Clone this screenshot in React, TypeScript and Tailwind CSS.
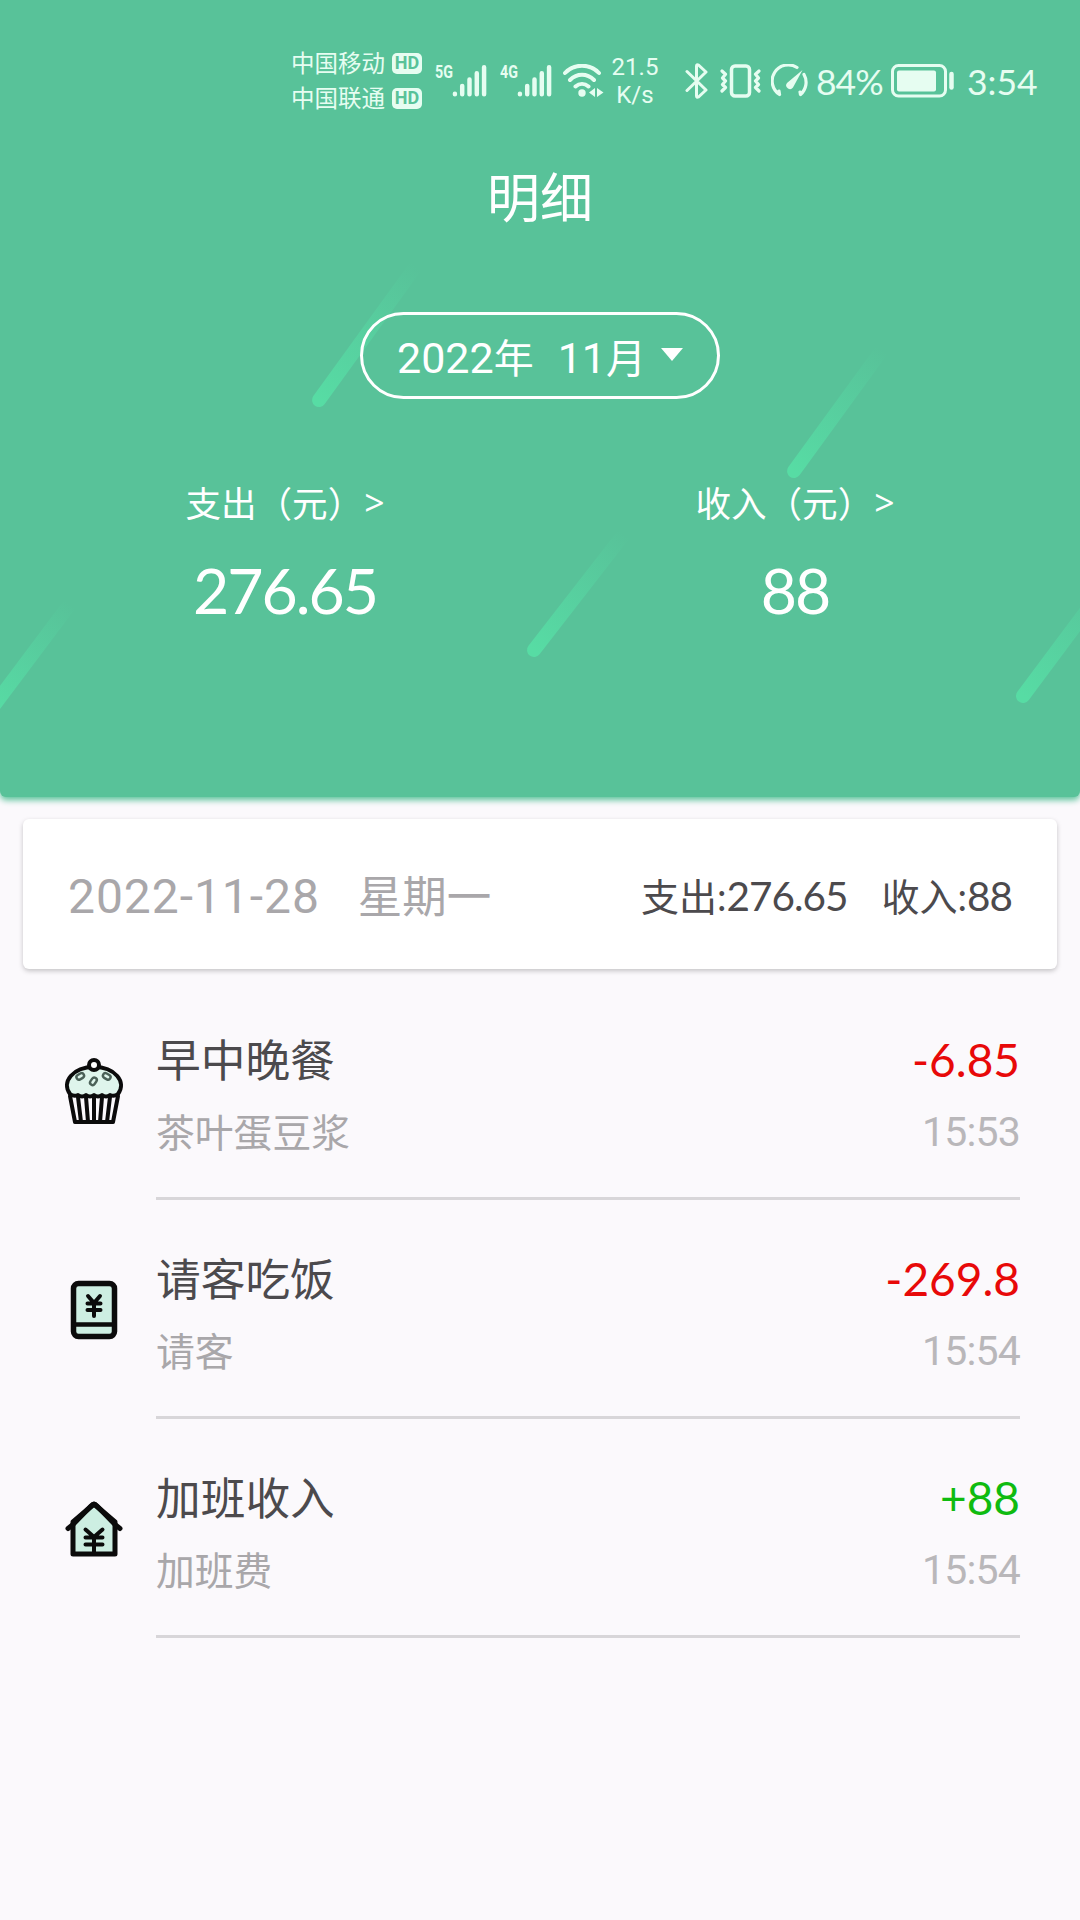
import React from 'react';

type Entry = {
  icon: React.ReactNode;
  title: string;
  note: string;
  amount: string;
  time: string;
  income?: boolean;
};

const Streaks = () => {
  const streaks = [
    [319, 400, 416, 266],
    [794, 471, 882, 350],
    [534, 650, 624, 534],
    [-8, 708, 70, 604],
    [1023, 696, 1114, 574],
  ];
  return (
    <svg className="absolute inset-0" width="1080" height="797" viewBox="0 0 1080 797" fill="none">
      {streaks.map(([x1, y1, x2, y2], i) => (
        <g key={i}>
          <linearGradient id={`streak-${i}`} gradientUnits="userSpaceOnUse" x1={x1} y1={y1} x2={x2} y2={y2}>
            <stop offset="0" stopColor="#57dca4" />
            <stop offset="0.35" stopColor="#57d8a3" stopOpacity="0.75" />
            <stop offset="1" stopColor="#57d8a3" stopOpacity="0" />
          </linearGradient>
          <line x1={x1} y1={y1} x2={x2} y2={y2} stroke={`url(#streak-${i})`} strokeWidth="14" strokeLinecap="round" />
        </g>
      ))}
    </svg>
  );
};

const Carrier = ({ name }: { name: string }) => (
  <div className="flex h-[35px] items-center">
    <span className="w-[101px] whitespace-nowrap text-[23.5px] leading-none">{name}</span>
    <span className="flex h-[21px] w-[30px] items-center justify-center rounded-[5px] bg-[#e6fdf1] font-['Roboto',sans-serif] text-[18px] font-bold leading-none text-[#58c299]">
      HD
    </span>
  </div>
);

const Signal = ({ label }: { label: string }) => (
  <div className="flex h-[34px] w-[52px]">
    <span className="w-[17px] origin-left scale-x-[0.75] whitespace-nowrap font-['Roboto',sans-serif] text-[19px] font-bold leading-[15px]">
      {label}
    </span>
    <svg width="36" height="34" viewBox="0 0 36 34" fill="none" stroke="currentColor" strokeWidth="4.6" strokeLinecap="round">
      <path d="M3 30.2v.5M10.500 22v8.700M18 15.500V30.700M25.500 9V30.700M33 2.800v27.900" />
    </svg>
  </div>
);

const WifiIcon = () => (
  <svg width="42" height="34" viewBox="0 0 42 34" fill="none" stroke="currentColor" strokeWidth="4" strokeLinecap="round">
    <path d="M2 9C11-.7 27-.7 36 9M7 16c7-7 17-7 24 0M12.500 22.500c4-3.500 9-3.500 13 0" />
    <circle cx="19" cy="29" r="3.700" fill="currentColor" stroke="none" />
    <path d="M32 24v9l-6-4.500zM34 24v9l6.500-4.500z" fill="currentColor" stroke="none" />
  </svg>
);

const BluetoothIcon = () => (
  <svg width="24" height="36" viewBox="0 0 24 36" fill="none" stroke="currentColor" strokeWidth="3" strokeLinecap="round" strokeLinejoin="round">
    <path d="M2 8.500 21 27l-7.500 7q-2 1-2-1V3q0-2 2-1L21 9 2 27.500" />
  </svg>
);

const VibrateIcon = () => (
  <svg width="41" height="34" viewBox="0 0 41 34" fill="none" stroke="currentColor" strokeWidth="3.200" strokeLinecap="round" strokeLinejoin="round">
    <rect x="11.500" y="2" width="18" height="30" rx="3.500" strokeWidth="3.500" />
    <path d="m2 7 3.500 3.200L2.500 14 5.500 17l-3 3.500 3 3L2 27M39 7l-3.500 3.200 3 3.800-3 3 3 3.500-3 3L39 27" />
  </svg>
);

const GaugeIcon = () => (
  <svg width="38" height="34" viewBox="0 0 38 34" fill="none" stroke="currentColor" strokeWidth="3.200" strokeLinecap="round">
    <path d="M8.500 30.500A16 16 0 0 1 26 3.500M33 10.500a16 16 0 0 1-3.500 20M8.500 30.500l-.5-3.500M29.500 30.500 29 28" />
    <path d="M31.500 6 22 23.500a3.700 3.700 0 0 1-6-4.500z" fill="currentColor" stroke="none" />
  </svg>
);

const BatteryIcon = () => (
  <svg width="64" height="34" viewBox="0 0 64 34" fill="none" stroke="currentColor">
    <rect x="1.500" y="1.500" width="53" height="30.500" rx="6" strokeWidth="3" />
    <rect x="6" y="6.500" width="39" height="21" rx="2" fill="currentColor" stroke="none" />
    <path d="M60.500 10v13.500" strokeWidth="4.500" strokeLinecap="round" />
  </svg>
);

const StatusBar = () => (
  <div className="flex h-[116px] items-center pl-[291px] pt-[45px] text-[#e6fdf1]">
    <div className="mt-[1px] h-[71px]">
      <Carrier name="中国移动" />
      <Carrier name="中国联通" />
    </div>
    <div className="ml-[13px] flex">
      <Signal label="5G" />
      <div className="w-[13px]" />
      <Signal label="4G" />
    </div>
    <div className="ml-[11px]">
      <WifiIcon />
    </div>
    <div className="ml-[5px] w-[50px] text-center font-['Roboto',sans-serif] text-[24px] leading-[28px]">
      <div>21.5</div>
      <div>K/s</div>
    </div>
    <div className="ml-[25px] flex items-center">
      <BluetoothIcon />
      <div className="ml-[11px]">
        <VibrateIcon />
      </div>
      <div className="ml-[10px]">
        <GaugeIcon />
      </div>
    </div>
    <span className="ml-[7px] mt-[2px] w-[75px] whitespace-nowrap font-['Lato',sans-serif] text-[35.500px] leading-[40px] tracking-[-1px]">84%</span>
    <BatteryIcon />
    <span className="ml-[12px] mt-[2px] whitespace-nowrap font-['Lato',sans-serif] text-[35.500px] leading-[40px]">3:54</span>
  </div>
);

const Total = ({ label, value }: { label: string; value: string }) => (
  <div className="flex w-[510px] flex-col items-center">
    <div className="flex h-[50px] items-center text-[35.600px] leading-none">
      <span>{label}（元）</span>
      <span className="ml-[1px] mt-[2px] font-['Open_Sans',sans-serif] font-medium">&gt;</span>
    </div>
    <div className="mt-[27px] font-['Lato',sans-serif] text-[62.500px] leading-[72px] tracking-[-2px]">{value}</div>
  </div>
);

const Header = () => (
  <header className="relative h-[797px] overflow-hidden rounded-b-md bg-[#58c299] text-white shadow-[0_3px_6px_#58c299]">
    <Streaks />
    <div className="relative">
      <StatusBar />
      <h1 className="mt-[44px] text-center text-[53px] leading-[70px]">明细</h1>
      <button className="mx-auto mt-[82px] flex h-[87px] w-[360px] items-center rounded-full border-[3px] border-white pl-[34px] text-[40px] leading-none">
        <span className="flex items-center">
          <span className="mt-[5px] font-['Roboto',sans-serif] text-[43px]">2022</span>年
        </span>
        <span className="ml-[24px] flex items-center">
          <span className="mt-[5px] font-['Roboto',sans-serif] text-[43px]">11</span>月
        </span>
        <svg className="mb-[3px] ml-[14px]" width="24" height="13" viewBox="0 0 24 13" fill="currentColor">
          <path d="M1 0h22L12 13z" />
        </svg>
      </button>
      <div className="mt-[78px] flex px-[30px]">
        <Total label="支出" value="276.65" />
        <Total label="收入" value="88" />
      </div>
    </div>
  </header>
);

const CupcakeIcon = () => (
  <svg width="62" height="68" viewBox="0 0 62 68" fill="none" stroke="#0b0b0b" strokeWidth="4" strokeLinecap="round" strokeLinejoin="round">
    <path d="M7 37C-2 25 10 10 31 10s33 15 24 27q-4 3-8 1-4 3-8 0-4 3-8 0-4 3-8 0-4 3-8 0-4 2-8-1z" fill="#dff5ec" />
    <path d="m7 39 5 26h38l5-26M15 40l3 25M23 40l2 25M31 40v25M39 40l-2 25M47 40l-3 25" />
    <circle cx="31" cy="8" r="5" fill="#fff" />
    <g stroke="#4b6158" strokeWidth="2.400">
      <rect x="13" y="17" width="8" height="5" rx="2.500" transform="rotate(-30 17 19)" />
      <rect x="26" y="22" width="8" height="5" rx="2.500" transform="rotate(-55 30 24)" />
      <rect x="40" y="17" width="8" height="5" rx="2.500" transform="rotate(30 44 19)" />
    </g>
  </svg>
);

const BookIcon = () => (
  <svg width="62" height="68" viewBox="0 0 62 68" fill="none" stroke="#0b0b0b" strokeWidth="5.500" strokeLinecap="round" strokeLinejoin="round">
    <rect x="10.500" y="7.500" width="41" height="53" rx="5" fill="#cdeee2" />
    <path d="M11 48.500h40" strokeWidth="4.500" />
    <path d="m25 20 6 7 6-7M24.500 27.500h13M24.500 34h13M31 27v13" strokeWidth="4" />
  </svg>
);

const HouseIcon = () => (
  <svg width="62" height="68" viewBox="0 0 62 68" fill="none" stroke="#0b0b0b" strokeWidth="5" strokeLinecap="round" strokeLinejoin="round">
    <path d="M10 27v32h42V27L31 9z" fill="#cdeee2" />
    <path d="m5 33.500 5-4L28 11q3-3 6 0l18 18.500 5 4" />
    <path d="m22.500 34.500 8.500 7.500 8.500-7.500M22.500 42.500h17M22.500 49.500h17M31 42v17" strokeWidth="4" />
  </svg>
);

const entries: Entry[] = [
  { icon: <CupcakeIcon />, title: '早中晚餐', note: '茶叶蛋豆浆', amount: '-6.85', time: '15:53' },
  { icon: <BookIcon />, title: '请客吃饭', note: '请客', amount: '-269.8', time: '15:54' },
  { icon: <HouseIcon />, title: '加班收入', note: '加班费', amount: '+88', time: '15:54', income: true },
];

const DayCard = () => (
  <section className="mx-[23px] mt-[22px] flex h-[150px] items-center justify-between rounded-md bg-white pl-[45px] pr-[45px] shadow-[0_2px_5px_rgba(0,0,0,0.22)]">
    <div className="flex items-center text-[#a9a7aa]">
      <span className="mt-[6px] font-['Roboto',sans-serif] text-[48px] leading-[60px] tracking-[0.950px]">2022-11-28</span>
      <span className="ml-[38px] text-[44.500px] leading-[60px]">星期一</span>
    </div>
    <div className="mt-[4px] flex items-center whitespace-nowrap font-['Lato','Noto_Sans_CJK_SC',sans-serif] text-[38px] leading-[60px] text-[#4c4a4d]">
      <span>支出:<span className="text-[40.500px] tracking-[-1px]">276.65</span></span>
      <span className="ml-[34px]">收入:<span className="text-[40.500px] tracking-[-1px]">88</span></span>
    </div>
  </section>
);

const EntryRow = ({ icon, title, note, amount, time, income }: Entry) => (
  <li className="flex h-[219px]">
    <div className="flex w-[156px] shrink-0 justify-center pt-[76px]">
      <div className="ml-[31px]">{icon}</div>
    </div>
    <div className="mr-[60px] flex flex-1 justify-between border-b-[3px] border-[#d8d6d9]">
      <div className="pt-[42px]">
        <div className="text-[44.700px] leading-[70px] text-[#4c4a4d]">{title}</div>
        <div className="text-[38.800px] leading-[74px] text-[#a9a7aa]">{note}</div>
      </div>
      <div className="pt-[44px] text-right">
        <div className={`font-['Lato',sans-serif] text-[46px] leading-[70px] ${income ? 'text-[#0fbb10]' : 'text-[#e80909]'}`}>
          {amount}
        </div>
        <div className="font-['Roboto',sans-serif] text-[41px] leading-[74px] tracking-[-0.800px] text-[#b9b7ba]">{time}</div>
      </div>
    </div>
  </li>
);

const App = () => {
  return (
    <div className="h-[1920px] w-[1080px] overflow-hidden bg-[#fbf9fc] font-['Noto_Sans_CJK_SC',sans-serif]">
      <Header />
      <DayCard />
      <ul className="mt-[12px]">
        {entries.map((entry) => (
          <EntryRow key={entry.title} {...entry} />
        ))}
      </ul>
    </div>
  );
};

export default App;
